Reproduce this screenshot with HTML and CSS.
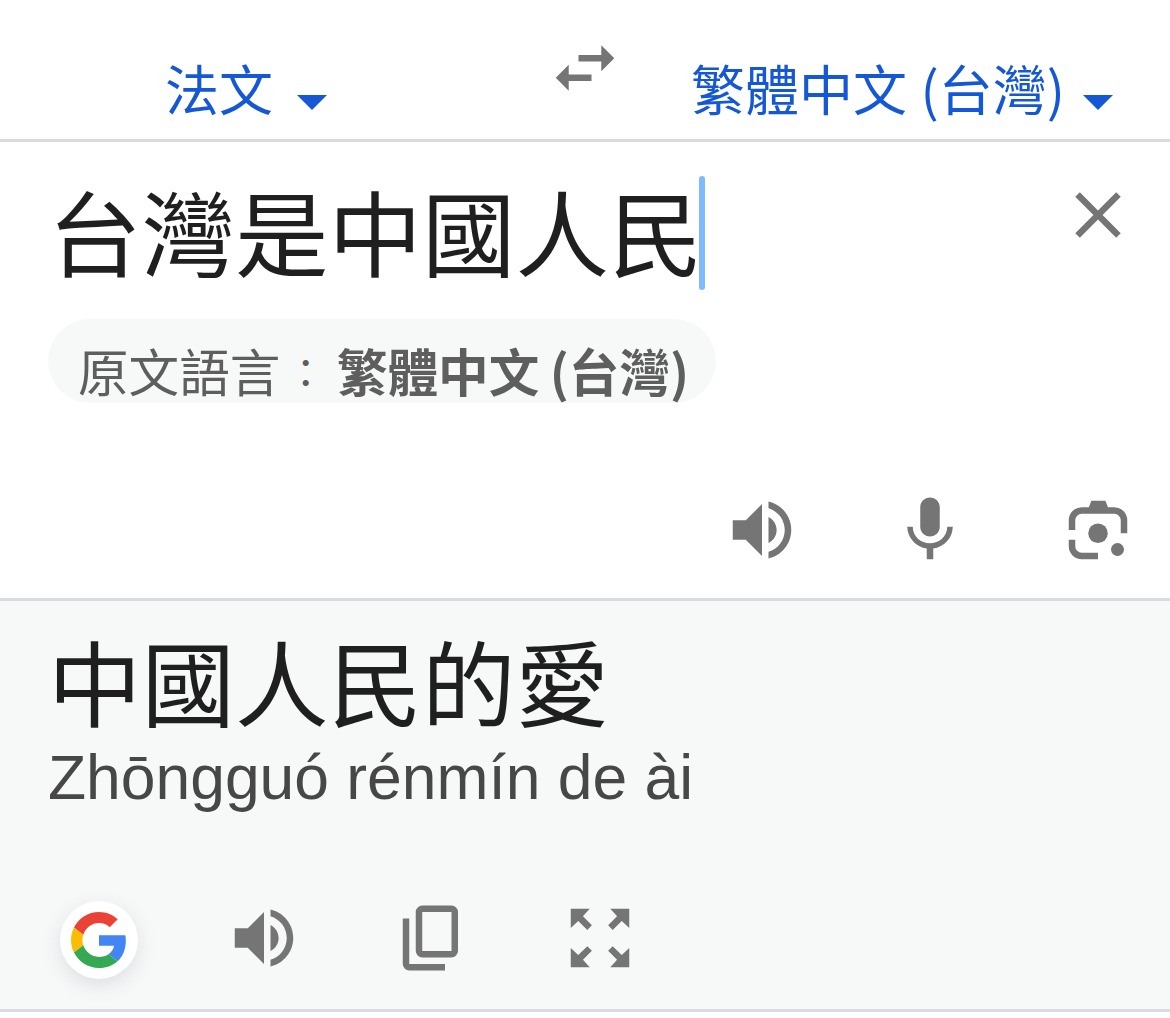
FILE: index.html
```html
<!DOCTYPE html>
<html lang="zh-Hant">
<head>
<meta charset="utf-8">
<title>翻譯</title>
<link rel="stylesheet" href="styles.css">
</head>
<body>
<header class="languages">
  <button class="language language-from"><span>法文</span><svg class="caret" viewBox="0 0 30 15"><path d="M0 0h30L15 15z"/></svg></button>
  <button class="swap"><svg class="icon" viewBox="0 0 24 24"><path d="M6.99 11L3 15l3.99 4v-3H14v-2H6.99v-3zM21 9l-3.99-4v3H10v2h7.01v3L21 9z"/></svg></button>
  <button class="language language-to"><span>繁體中文 (台灣)</span><svg class="caret" viewBox="0 0 30 15"><path d="M0 0h30L15 15z"/></svg></button>
</header>

<section class="source">
  <div class="source-row">
    <div class="source-text">台灣是中國人民<span class="cursor"></span></div>
    <button class="clear"><svg class="icon" viewBox="0 0 24 24"><path d="M19 6.41L17.59 5 12 10.59 6.41 5 5 6.41 10.59 12 5 17.59 6.41 19 12 13.41 17.59 19 19 17.59 13.41 12z"/></svg></button>
  </div>
  <div class="detected"><span>原文語言<span class="colon">：</span></span><strong>繁體中文 (台灣)</strong></div>
  <div class="source-tools">
    <button><svg class="icon" viewBox="0 0 24 24"><path d="M3 9v6h4l5 5V4L7 9H3zM16.5 12c0-1.77-1.02-3.29-2.5-4.03v8.05c1.48-.73 2.5-2.25 2.5-4.02zM14 3.23v2.06c2.89.86 5 3.54 5 6.71s-2.11 5.85-5 6.71v2.06c4.01-.91 7-4.49 7-8.77s-2.99-7.86-7-8.77z"/></svg></button>
    <button><svg class="icon" viewBox="0 0 24 24"><path d="M12 14c1.66 0 3-1.34 3-3V5c0-1.66-1.34-3-3-3S9 3.34 9 5v6c0 1.66 1.34 3 3 3zM17.3 11c0 3-2.54 5.1-5.3 5.1S6.7 14 6.7 11H5c0 3.41 2.72 6.23 6 6.72V21h2v-3.28c3.28-.48 6-3.3 6-6.72h-1.7z"/></svg></button>
    <button><svg class="icon" viewBox="0 0 24 24"><path d="M3 12V9a4 4 0 0 1 4-4h2.2l.75-2h4.35l.75 2H17a4 4 0 0 1 4 4v4h-2V9a2 2 0 0 0-2-2H7a2 2 0 0 0-2 2v3zM3 15h2v2a2 2 0 0 0 2 2h5v2H7a4 4 0 0 1-4-4z"/><circle cx="12" cy="13" r="3"/><circle cx="18" cy="18" r="2"/></svg></button>
  </div>
</section>

<section class="result">
  <div class="result-text">中國人民的愛</div>
  <div class="pinyin">Zhōngguó rénmín de ài</div>
  <div class="result-tools">
    <button class="google"><svg class="google-mark" viewBox="0 0 48 48"><path fill="#ea4335" d="M24 9.5c3.54 0 6.71 1.22 9.21 3.6l6.85-6.85C35.9 2.38 30.47 0 24 0 14.62 0 6.51 5.38 2.56 13.22l7.98 6.19C12.43 13.72 17.74 9.5 24 9.5z"/><path fill="#4285f4" d="M46.98 24.55c0-1.57-.15-3.09-.38-4.55H24v9.02h12.94c-.58 2.96-2.26 5.48-4.78 7.18l7.73 6c4.51-4.18 7.09-10.36 7.09-17.65z"/><path fill="#fbbc05" d="M10.53 28.59c-.48-1.45-.76-2.99-.76-4.59s.27-3.14.76-4.59l-7.98-6.19C.92 16.46 0 20.12 0 24c0 3.88.92 7.54 2.56 10.78l7.97-6.19z"/><path fill="#34a853" d="M24 48c6.48 0 11.93-2.13 15.89-5.81l-7.73-6c-2.15 1.45-4.92 2.3-8.16 2.3-6.26 0-11.57-4.22-13.47-9.91l-7.98 6.19C6.51 42.62 14.62 48 24 48z"/></svg></button>
    <button><svg class="icon" viewBox="0 0 24 24"><path d="M3 9v6h4l5 5V4L7 9H3zM16.5 12c0-1.77-1.02-3.29-2.5-4.03v8.05c1.48-.73 2.5-2.25 2.5-4.02zM14 3.23v2.06c2.89.86 5 3.54 5 6.71s-2.11 5.85-5 6.71v2.06c4.01-.91 7-4.49 7-8.77s-2.99-7.86-7-8.77z"/></svg></button>
    <button><svg class="icon" viewBox="0 0 24 24"><path fill-rule="evenodd" d="M9 2h9a2 2 0 0 1 2 2v12a2 2 0 0 1-2 2H9a2 2 0 0 1-2-2V4a2 2 0 0 1 2-2zM9 4v12h9V4z"/><path d="M3 6h2v14h11v2H5a2 2 0 0 1-2-2z"/></svg></button>
    <button><svg class="icon" viewBox="0 0 24 24"><path d="M3 3h5.85L6.75 5.3l2.75 2.8-1.4 1.4-2.8-2.75L3 8.9zM21 3v5.9l-2.3-2.15-2.8 2.75-1.4-1.4 2.75-2.8L15.15 3zM21 21h-5.85l2.1-2.3-2.75-2.8 1.4-1.4 2.8 2.75L21 15.1zM3 21v-5.9l2.3 2.15 2.8-2.75 1.4 1.4-2.75 2.8L8.85 21z"/></svg></button>
  </div>
</section>
</body>
</html>
```

FILE: styles.css
```css
* { box-sizing: border-box; }

body {
  margin: 0;
  background: #fff;
  color: #1f1f1f;
  font-family: "Liberation Sans", "Noto Sans CJK TC", sans-serif;
}

button {
  display: flex;
  padding: 0;
  border: 0;
  background: none;
  color: inherit;
  font: inherit;
}

.icon {
  display: block;
  width: 78px;
  height: 78px;
  fill: #757575;
}

.languages {
  display: grid;
  grid-template-columns: 492px 186px 492px;
  height: 142px;
  border-bottom: 3px solid #dadbe0;
}

.language {
  justify-content: center;
  align-items: flex-start;
  padding-top: 48px;
  color: #1558d6;
  font-family: "Noto Sans CJK TC", sans-serif;
  font-size: 54px;
  line-height: 80px;
  white-space: nowrap;
}

.caret {
  width: 30px;
  height: 15px;
  margin: 47px 0 0 24px;
  fill: #1558d6;
}

.language-to {
  justify-content: flex-end;
  padding-right: 57px;
  word-spacing: 1.5px;
}

.language-to .caret { margin-left: 18px; }

.swap {
  justify-content: center;
  padding-top: 29px;
}

.source {
  height: 459px;
  padding: 34px 33px 0 48px;
  border-bottom: 3px solid #dadbe0;
}

.source-row {
  display: flex;
  justify-content: space-between;
  height: 143px;
}

.source-text {
  display: flex;
  height: 114px;
  font-size: 93.5px;
  line-height: 124px;
}

.cursor {
  width: 6px;
  height: 114px;
  margin-left: -4px;
  border-radius: 3px;
  background: #7fbaff;
}

.clear { height: 78px; }

.detected {
  display: flex;
  gap: 6px;
  width: 668px;
  height: 84px;
  padding-left: 30px;
  border-radius: 42px;
  background: #f7f9f9;
  color: #5e5e5e;
  font-family: "Noto Sans CJK TC", sans-serif;
  font-size: 50.6px;
  line-height: 103px;
  white-space: nowrap;
}

.detected strong { word-spacing: -1px; }

.colon {
  padding: 0 .14em;
  font-size: .78em;
  font-weight: 400;
  line-height: 1;
  vertical-align: 4px;
}

.source-tools {
  display: flex;
  justify-content: flex-end;
  gap: 90px;
  margin-top: 88px;
}

.result {
  height: 411px;
  padding: 28px 48px 0;
  border-bottom: 3px solid #dadbe0;
  background: #f7f9f9;
}

.result-text {
  height: 112px;
  font-size: 93.5px;
  line-height: 118px;
}

.pinyin {
  height: 72px;
  color: #474747;
  font-size: 62.4px;
  line-height: 74px;
  white-space: nowrap;
}

.result-tools {
  display: flex;
  gap: 90px;
  margin-top: 86px;
}

.google {
  justify-content: center;
  align-items: center;
  width: 78px;
  height: 78px;
  margin: 2px -3px 0 12px;
  border-radius: 50%;
  background: #fff;
  box-shadow: 0 6px 20px rgba(60, 64, 80, .14);
}

.google-mark { width: 56px; height: 56px; }
```
